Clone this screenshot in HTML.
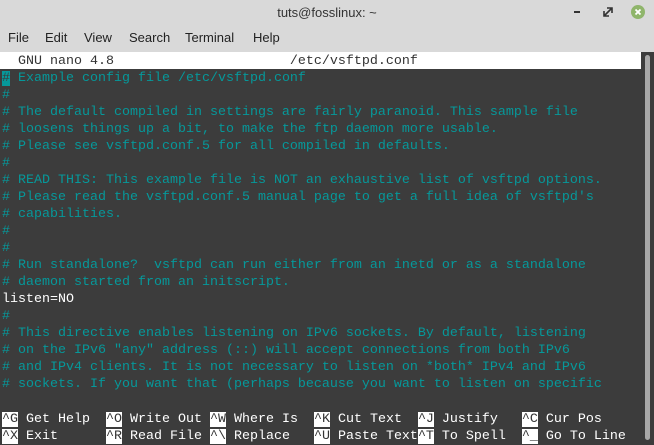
<!DOCTYPE html>
<html><head><style>
body{margin:0;width:654px;height:445px;overflow:hidden;background:#d9d9d9;font-family:"Liberation Sans",sans-serif;position:relative}
.title{position:absolute;top:0;left:0;width:654px;height:26px;text-align:center;line-height:26px;font-size:13px;color:#333}
.menu{position:absolute;top:26px;left:0;height:26px;line-height:24px;font-size:13px;color:#222}
.menu span{position:absolute;white-space:nowrap}
.term{position:absolute;top:52px;left:0;width:641px;height:393px;background:#3c3c3c}
.sb{position:absolute;top:52px;left:641px;width:13px;height:393px;background:#3c3c3c}
.sb div{position:absolute;left:4px;top:3px;width:5px;height:385px;background:#a8a8a8;border-radius:3px}
pre{margin:0;position:absolute;left:2px;top:2px;font-family:"Liberation Mono",monospace;font-size:13.33px;line-height:17px;color:#06989a}
.w{color:#fff}
.hd{position:absolute;left:0;top:0;width:641px;height:17px;background:#fff}
.hd pre{color:#333;top:1px}
.k{background:#fff;color:#333}
.cur{background:#06989a;color:#3c3c3c}
.ctl{left:2px;top:359px;color:#fff}
</style></head><body>
<div class="title">tuts@fosslinux: ~</div>
<svg style="position:absolute;left:572px;top:9px" width="12" height="6"><rect x="2" y="2" width="6" height="2" fill="#333"/></svg>
<svg style="position:absolute;left:603px;top:7px" width="10" height="10"><path d="M1 9 L9 1 M4 1 H9 V6 M1 4 V9 H6" stroke="#333" stroke-width="1.6" fill="none"/></svg>
<svg style="position:absolute;left:630px;top:4px" width="16" height="16"><circle cx="8" cy="8" r="7" fill="#8fb56b"/><path d="M5.5 5.5 L10.5 10.5 M10.5 5.5 L5.5 10.5" stroke="#fff" stroke-width="1.8"/></svg>
<div class="menu"><span style="left:8px">File</span><span style="left:45px">Edit</span><span style="left:84px">View</span><span style="left:129px">Search</span><span style="left:185px">Terminal</span><span style="left:253px">Help</span></div>
<div class="term">
<div class="hd"><pre>  GNU nano 4.8                      /etc/vsftpd.conf</pre></div>
<pre style="top:18px"><span class="cur">#</span> Example config file /etc/vsftpd.conf
#
# The default compiled in settings are fairly paranoid. This sample file
# loosens things up a bit, to make the ftp daemon more usable.
# Please see vsftpd.conf.5 for all compiled in defaults.
#
# READ THIS: This example file is NOT an exhaustive list of vsftpd options.
# Please read the vsftpd.conf.5 manual page to get a full idea of vsftpd's
# capabilities.
#
#
# Run standalone?  vsftpd can run either from an inetd or as a standalone
# daemon started from an initscript.
<span class="w">listen=NO</span>
#
# This directive enables listening on IPv6 sockets. By default, listening
# on the IPv6 "any" address (::) will accept connections from both IPv6
# and IPv4 clients. It is not necessary to listen on *both* IPv4 and IPv6
# sockets. If you want that (perhaps because you want to listen on specific</pre>
<pre class="ctl"><span class="k">^G</span> Get Help  <span class="k">^O</span> Write Out <span class="k">^W</span> Where Is  <span class="k">^K</span> Cut Text  <span class="k">^J</span> Justify   <span class="k">^C</span> Cur Pos
<span class="k">^X</span> Exit      <span class="k">^R</span> Read File <span class="k">^\</span> Replace   <span class="k">^U</span> Paste Text<span class="k">^T</span> To Spell  <span class="k">^_</span> Go To Line</pre>
</div>
<div class="sb"><div></div></div>
</body></html>
